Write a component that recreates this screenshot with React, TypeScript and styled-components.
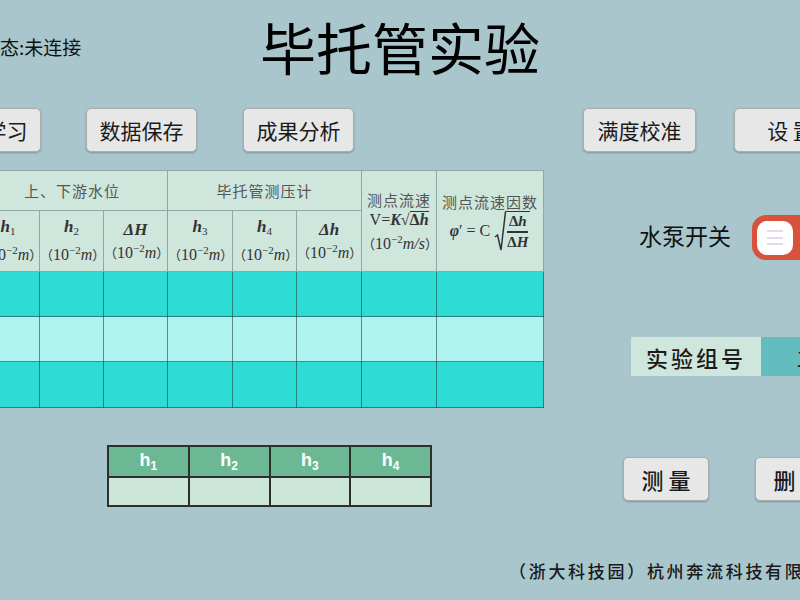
import React from 'react';
import styled, { createGlobalStyle } from 'styled-components';

const GlobalStyle = createGlobalStyle`
  html, body {
    margin: 0;
    padding: 0;
    background: #a8c6cc;
    overflow: hidden;
  }
  body {
    font-family: 'Noto Sans CJK SC', 'Noto Sans', sans-serif;
  }
`;

const CJK = `'Noto Sans CJK SC', 'Noto Sans', sans-serif`;
const MATH = `'Liberation Serif', 'DejaVu Serif', serif`;

// the screen is wider than the window, shifted so its middle sits at x=400
const Stage = styled.div`
  width: 960px;
  height: 600px;
  margin-left: -80px;
  display: flex;
  flex-direction: column;
`;

const Header = styled.header`
  display: grid;
  grid-template-columns: 1fr auto 1fr;
  align-items: start;
  height: 108px;
`;

const Status = styled.div`
  padding: 36px 0 0 61px;
  font-size: 19px;
  line-height: 22px;
  color: #111;
`;

const Title = styled.h1`
  margin: 14px 0 0;
  font-family: ${CJK};
  font-size: 56px;
  font-weight: 400;
  line-height: 64px;
  color: #000;
`;

const ButtonRow = styled.div`
  display: flex;
  align-items: center;
  height: 44px;
  padding-left: 10px;
`;

const Button = styled.button<{ $w?: number; $ml?: number; $strong?: boolean }>`
  flex: none;
  width: ${(p) => p.$w ?? 111}px;
  height: 44px;
  margin-left: ${(p) => p.$ml ?? 0}px;
  padding: 0;
  background: #e7e7e7;
  border: 1px solid #acacac;
  border-radius: 5px;
  box-shadow: 0 1px 2px rgba(0, 0, 0, 0.25);
  font-family: ${CJK};
  font-size: ${(p) => (p.$strong ? 22 : 21)}px;
  font-weight: ${(p) => (p.$strong ? 500 : 400)};
  color: #1a1a1a;
  white-space: pre;
`;

const Main = styled.main`
  display: grid;
  grid-template-columns: 623px 1fr;
  margin-top: 18px;
`;

const LeftCol = styled.section`
  padding-left: 56px;
  display: flex;
  flex-direction: column;
`;

const DataTable = styled.table`
  width: 567px;
  border-collapse: collapse;
  table-layout: fixed;
  font-family: ${CJK};
`;

const HeadCell = styled.th<{ $h?: number }>`
  height: ${(p) => p.$h ?? 39}px;
  padding: 0;
  background: #cfe6dc;
  border: 1px solid #8fa8a2;
  color: #555;
  font-size: 15px;
  font-weight: 400;
  line-height: 19px;
  letter-spacing: 1px;
  white-space: nowrap;
  vertical-align: middle;
`;

const BodyCell = styled.td<{ $light?: boolean; $h: number }>`
  height: ${(p) => p.$h}px;
  padding: 0;
  background: ${(p) => (p.$light ? '#aef3f0' : '#2edcd6')};
  border: 1px solid rgba(30, 70, 70, 0.6);
`;

const Var = styled.span`
  display: block;
  font-family: ${MATH};
  font-style: italic;
  font-weight: 700;
  font-size: 17px;
  line-height: 17px;
  color: #333;
  letter-spacing: 0;
  sub {
    font-size: 11px;
    font-style: normal;
    font-weight: 400;
    vertical-align: -3px;
  }
`;

const Unit = styled.span`
  display: block;
  margin-top: 1px;
  font-family: ${MATH};
  font-size: 16px;
  line-height: 18px;
  color: #333;
  letter-spacing: 0;
  sup {
    font-size: 11px;
    vertical-align: 6px;
  }
`;

const Paren = styled.span`
  font-family: ${CJK};
  font-size: 13px;
`;

const Line = styled.span`
  display: block;
`;

const Formula = styled.span`
  display: inline-flex;
  align-items: center;
  font-family: ${MATH};
  font-size: 16px;
  color: #333;
  letter-spacing: 0;
  b {
    font-style: italic;
  }
`;

const Overline = styled.span`
  border-top: 1.5px solid #333;
  line-height: 16px;
  font-weight: 700;
`;

const Frac = styled.span`
  display: inline-flex;
  flex-direction: column;
  align-items: center;
  border-top: 1.5px solid #333;
  padding: 2px 2px 0;
  font-weight: 700;
  font-size: 15px;
  line-height: 15px;
`;

const FracBar = styled.span`
  width: 100%;
  height: 1.5px;
  margin: 2px 0;
  background: #333;
`;

const SmallTable = styled.table`
  width: 325px;
  margin: 37px 0 0 131px;
  border-collapse: collapse;
  table-layout: fixed;
`;

const SmallHead = styled.th`
  height: 29px;
  padding: 0;
  background: #6cb894;
  border: 2px solid #2e2e2e;
  color: #fff;
  font-family: 'Liberation Sans', Arial, sans-serif;
  font-size: 18px;
  font-weight: 700;
  sub {
    font-size: 12px;
    vertical-align: -4px;
  }
`;

const SmallCell = styled.td`
  height: 27px;
  padding: 0;
  background: #cde6da;
  border: 2px solid #2e2e2e;
`;

const RightCol = styled.section`
  display: flex;
  flex-direction: column;
`;

const PumpRow = styled.div`
  display: flex;
  align-items: center;
  gap: 21px;
  margin-top: 45px;
  padding-left: 96px;
`;

const PumpLabel = styled.span`
  margin-bottom: 5px;
  font-size: 23px;
  line-height: 30px;
  color: #111;
`;

const Switch = styled.div<{ $on?: boolean }>`
  flex: none;
  display: flex;
  align-items: center;
  justify-content: ${(p) => (p.$on ? 'flex-end' : 'flex-start')};
  width: 90px;
  height: 45px;
  padding: 0 5px;
  box-sizing: border-box;
  border-radius: 14px;
  background: ${(p) => (p.$on ? '#3cb371' : '#d9523c')};
`;

const Knob = styled.div`
  width: 36px;
  height: 34px;
  border-radius: 10px;
  background: #fff;
  display: flex;
  flex-direction: column;
  align-items: center;
  justify-content: center;
  gap: 4.5px;
`;

const KnobLine = styled.span`
  width: 16px;
  height: 2px;
  background: #e9d7ee;
`;

const GroupRow = styled.div`
  display: flex;
  margin-top: 77px;
  padding-left: 88px;
  height: 39px;
`;

const GroupLabel = styled.div`
  flex: none;
  width: 130px;
  display: flex;
  align-items: center;
  justify-content: center;
  background: #cfe6dc;
  font-size: 22px;
  font-weight: 500;
  letter-spacing: 3px;
  color: #1a1a1a;
`;

const GroupValue = styled.div`
  flex: none;
  width: 82px;
  display: flex;
  align-items: center;
  justify-content: center;
  background: #63bdbe;
  font-family: ${CJK};
  font-size: 22px;
  color: #1a1a1a;
`;

const ActionRow = styled.div`
  display: flex;
  gap: 46px;
  margin-top: 81px;
  padding-left: 80px;
`;

const Footer = styled.footer`
  margin-top: 52px;
  padding-left: 589px;
  font-size: 17px;
  font-weight: 500;
  line-height: 24px;
  letter-spacing: 2.7px;
  color: #1a1a1a;
  white-space: nowrap;
`;

const Sqrt = () => (
  <svg width="12" height="40" viewBox="0 0 12 40" style={{ marginRight: -1 }}>
    <path d="M1 26 L3.5 24 L7 39 L11.5 0.8" fill="none" stroke="#333" strokeWidth="1.5" />
  </svg>
);

const UnitText = ({ u }: { u: string }) => (
  <Unit>
    <Paren>（</Paren>10<sup>−2</sup>
    <i>{u}</i>
    <Paren>）</Paren>
  </Unit>
);

const columns = [63, 64, 64, 65, 64, 65, 75, 107];
const rows = [
  { h: 44, light: false },
  { h: 44, light: true },
  { h: 45, light: false },
];
const levels = ['h', 'h', 'ΔH', 'h', 'h', 'Δh'];
const subs = ['1', '2', '', '3', '4', ''];

export default function App() {
  return (
    <>
      <GlobalStyle />
      <Stage>
        <Header>
          <Status>状态:未连接</Status>
          <Title>毕托管实验</Title>
          <div />
        </Header>

        <ButtonRow>
          <Button>视频学习</Button>
          <Button $ml={45}>数据保存</Button>
          <Button $ml={46}>成果分析</Button>
          <Button $w={113} $ml={229}>满度校准</Button>
          <Button $w={113} $ml={38}>设 置</Button>
        </ButtonRow>

        <Main>
          <LeftCol>
            <DataTable>
              <colgroup>
                {columns.map((w, i) => (
                  <col key={i} style={{ width: w }} />
                ))}
              </colgroup>
              <thead>
                <tr>
                  <HeadCell colSpan={3}>上、下游水位</HeadCell>
                  <HeadCell colSpan={3}>毕托管测压计</HeadCell>
                  <HeadCell rowSpan={2}>
                    <Line>测点流速</Line>
                    <Line>
                      <Formula>
                        V=<b>K</b>√<Overline>Δ<i>h</i></Overline>
                      </Formula>
                    </Line>
                    <UnitText u="m/s" />
                  </HeadCell>
                  <HeadCell rowSpan={2}>
                    <Line>测点流速因数</Line>
                    <Line>
                      <Formula>
                        <b>φ</b>′ = C&nbsp;
                        <Sqrt />
                        <Frac>
                          <span>Δ<i>h</i></span>
                          <FracBar />
                          <span>Δ<i>H</i></span>
                        </Frac>
                      </Formula>
                    </Line>
                  </HeadCell>
                </tr>
                <tr>
                  {levels.map((v, i) => (
                    <HeadCell key={i} $h={60}>
                      <Var>
                        {v}
                        {subs[i] && <sub>{subs[i]}</sub>}
                      </Var>
                      <UnitText u="m" />
                    </HeadCell>
                  ))}
                </tr>
              </thead>
              <tbody>
                {rows.map((r, i) => (
                  <tr key={i}>
                    {columns.map((_, j) => (
                      <BodyCell key={j} $h={r.h} $light={r.light} />
                    ))}
                  </tr>
                ))}
              </tbody>
            </DataTable>

            <SmallTable>
              <thead>
                <tr>
                  {[1, 2, 3, 4].map((n) => (
                    <SmallHead key={n}>
                      h<sub>{n}</sub>
                    </SmallHead>
                  ))}
                </tr>
              </thead>
              <tbody>
                <tr>
                  {[1, 2, 3, 4].map((n) => (
                    <SmallCell key={n} />
                  ))}
                </tr>
              </tbody>
            </SmallTable>
          </LeftCol>

          <RightCol>
            <PumpRow>
              <PumpLabel>水泵开关</PumpLabel>
              <Switch>
                <Knob>
                  <KnobLine />
                  <KnobLine />
                  <KnobLine />
                </Knob>
              </Switch>
            </PumpRow>

            <GroupRow>
              <GroupLabel>实验组号</GroupLabel>
              <GroupValue>1</GroupValue>
            </GroupRow>

            <ActionRow>
              <Button $w={86} $strong>测 量</Button>
              <Button $w={86} $strong>删 除</Button>
            </ActionRow>
          </RightCol>
        </Main>

        <Footer>（浙大科技园）杭州奔流科技有限公司</Footer>
      </Stage>
    </>
  );
}
